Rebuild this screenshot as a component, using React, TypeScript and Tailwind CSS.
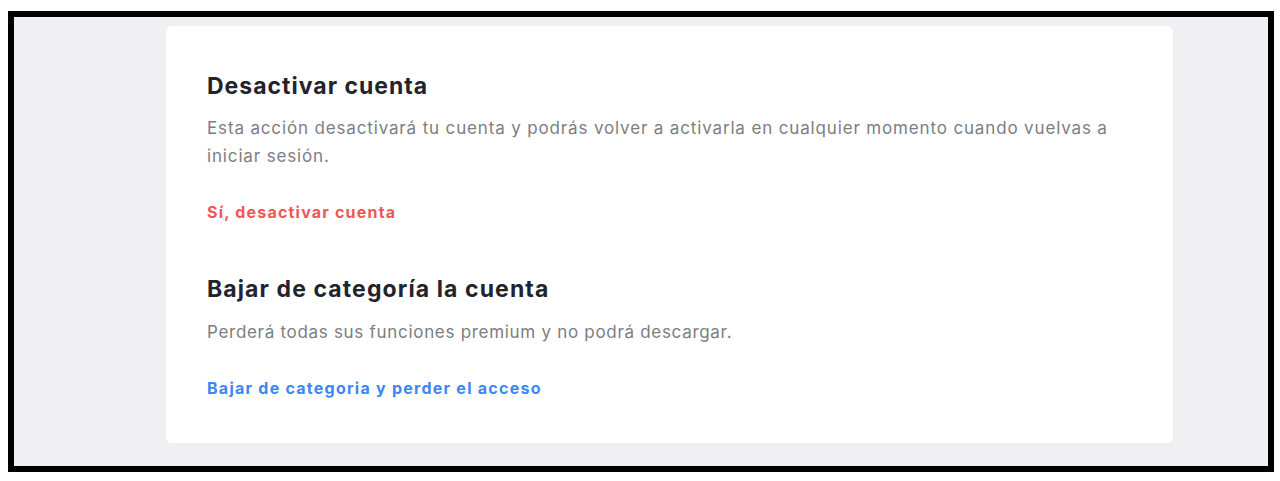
export default function App() {
  return (
    <div className="w-[1280px] h-[481px] bg-white pt-[11px] pl-[8px] font-['Inter',sans-serif]">
      <div className="w-[1266px] h-[461px] border-[6px] border-black bg-[#f0f0f2] pt-[9px] pl-[152px]">
        <div className="w-[1007px] h-[417px] bg-white rounded-[6px] pl-[41px] pt-[46px]">
          <section>
            <h2 className="text-[23px] font-bold text-[#23232d] leading-[28px] tracking-[1px]">Desactivar cuenta</h2>
            <p className="mt-[14px] text-[17px] text-[#7d7d82] leading-[28px] tracking-[0.85px] max-w-[920px]">
              Esta acción desactivará tu cuenta y podrás volver a activarla en cualquier momento cuando vuelvas a
              iniciar sesión.
            </p>
            <button className="mt-[30px] text-[16px] font-bold text-[#ef5757] leading-[24px] tracking-[1.2px]">
              Sí, desactivar cuenta
            </button>
          </section>
          <section className="mt-[51px]">
            <h2 className="text-[23px] font-bold text-[#23232d] leading-[28px] tracking-[1.1px]">
              Bajar de categoría la cuenta
            </h2>
            <p className="mt-[15px] text-[17px] text-[#7d7d82] leading-[28px] tracking-[0.7px]">
              Perderá todas sus funciones premium y no podrá descargar.
            </p>
            <button className="mt-[30px] text-[16px] font-bold text-[#3d86f4] leading-[24px] tracking-[1.25px]">
              Bajar de categoria y perder el acceso
            </button>
          </section>
        </div>
      </div>
    </div>
  )
}
